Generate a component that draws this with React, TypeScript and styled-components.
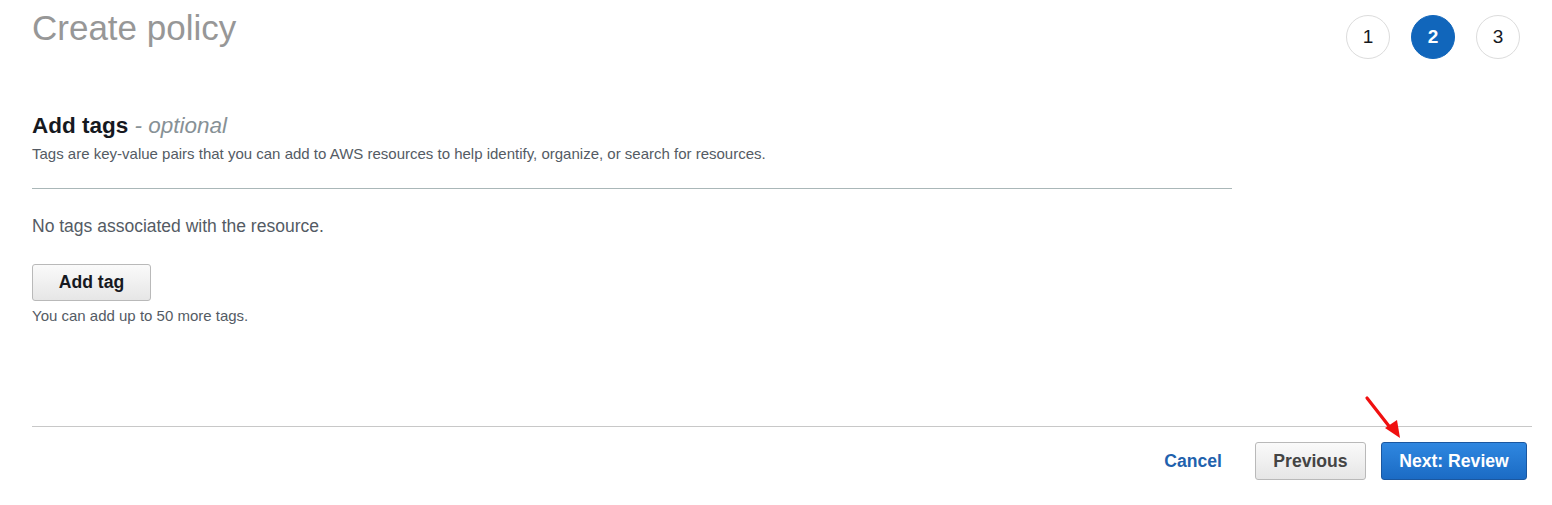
import React from "react";
import styled, { createGlobalStyle } from "styled-components";

const Global = createGlobalStyle`
  html, body { margin: 0; padding: 0; background: #fff; }
  body { font-family: "Liberation Sans", Arial, sans-serif; color: #16191f; }
`;

const Page = styled.div`
  position: relative;
  width: 1552px;
  height: 505px;
  box-sizing: border-box;
  padding: 0 20px 0 32px;
`;

const Header = styled.div`
  display: flex;
  justify-content: space-between;
  align-items: flex-start;
  height: 112px;
`;

const Title = styled.h1`
  margin: 7px 0 0;
  font-size: 35px;
  font-weight: 400;
  line-height: 42px;
  color: #979797;
`;

const Steps = styled.div`
  display: flex;
  gap: 21px;
  margin: 15px 12px 0 0;
`;

const Step = styled.div<{ $active?: boolean }>`
  width: 44px;
  height: 44px;
  box-sizing: border-box;
  border-radius: 50%;
  display: flex;
  align-items: center;
  justify-content: center;
  font-size: 19px;
  font-weight: ${(p) => (p.$active ? 700 : 400)};
  color: ${(p) => (p.$active ? "#fff" : "#16191f")};
  background: ${(p) => (p.$active ? "#1166bb" : "#fff")};
  border: 1px solid ${(p) => (p.$active ? "#1166bb" : "#dcdcdc")};
`;

const Section = styled.section`
  width: 1200px;
`;

const Heading = styled.h2`
  margin: 0;
  font-size: 22.5px;
  line-height: 28px;
  font-weight: 700;
  color: #16191f;
`;

const Optional = styled.span`
  font-weight: 400;
  font-style: italic;
  color: #879196;
`;

const Description = styled.p`
  margin: 5px 0 0;
  font-size: 15px;
  line-height: 18px;
  color: #545b64;
`;

const Divider = styled.hr`
  margin: 25px 0 0;
  border: none;
  border-top: 1px solid #aab7b8;
  height: 0;
`;

const EmptyText = styled.p`
  margin: 26px 0 0;
  font-size: 17.5px;
  line-height: 22px;
  color: #545b64;
`;

const Button = styled.button<{ $primary?: boolean }>`
  box-sizing: border-box;
  height: 38px;
  padding: 0;
  border-radius: 3px;
  font-family: "Liberation Sans", Arial, sans-serif;
  font-size: 17.6px;
  font-weight: 700;
  cursor: pointer;
  color: ${(p) => (p.$primary ? "#fff" : "#222")};
  border: 1px solid ${(p) => (p.$primary ? "#1a57a0" : "#b9b9b9")};
  background: ${(p) =>
    p.$primary
      ? "linear-gradient(to bottom, #2f87e0, #1b6bc4)"
      : "linear-gradient(to bottom, #fafafa, #e6e6e6)"};
`;

const AddTagButton = styled(Button)`
  display: block;
  width: 119px;
  height: 37px;
  margin-top: 27px;
  color: #16191f;
`;

const Helper = styled.p`
  margin: 6px 0 0;
  font-size: 15px;
  line-height: 18px;
  color: #545b64;
`;

const Footer = styled.div`
  margin-top: 101px;
`;

const FooterDivider = styled.hr`
  margin: 0;
  border: none;
  border-top: 1px solid #c8c8c8;
  height: 0;
`;

const Actions = styled.div`
  display: flex;
  justify-content: flex-end;
  align-items: center;
  gap: 15px;
  margin-top: 15px;
  padding-right: 5px;
`;

const LinkButton = styled.button`
  background: none;
  border: none;
  padding: 0 18px 0 0;
  font-family: "Liberation Sans", Arial, sans-serif;
  font-size: 17.6px;
  font-weight: 700;
  color: #1f62ad;
  cursor: pointer;
`;

const PreviousButton = styled(Button)`
  width: 111px;
  color: #444;
`;

const NextButton = styled(Button)`
  width: 146px;
`;

const Arrow = styled.svg`
  position: absolute;
  left: 1360px;
  top: 392px;
  overflow: visible;
`;

export default function App() {
  return (
    <>
      <Global />
      <Page>
        <Header>
          <Title>Create policy</Title>
          <Steps>
            <Step>1</Step>
            <Step $active>2</Step>
            <Step>3</Step>
          </Steps>
        </Header>
        <Section>
          <Heading>
            Add tags <Optional>- optional</Optional>
          </Heading>
          <Description>
            Tags are key-value pairs that you can add to AWS resources to help identify, organize, or search for resources.
          </Description>
          <Divider />
          <EmptyText>No tags associated with the resource.</EmptyText>
          <AddTagButton>Add tag</AddTagButton>
          <Helper>You can add up to 50 more tags.</Helper>
        </Section>
        <Footer>
          <FooterDivider />
          <Actions>
            <LinkButton>Cancel</LinkButton>
            <PreviousButton>Previous</PreviousButton>
            <NextButton $primary>Next: Review</NextButton>
          </Actions>
        </Footer>
        <Arrow width="50" height="52" viewBox="0 0 50 52">
          <line x1="7" y1="6" x2="32" y2="38" stroke="#f01010" strokeWidth="3.2" strokeLinecap="round" />
          <polygon points="25,36 40,46 37,28" fill="#f01010" />
        </Arrow>
      </Page>
    </>
  );
}
